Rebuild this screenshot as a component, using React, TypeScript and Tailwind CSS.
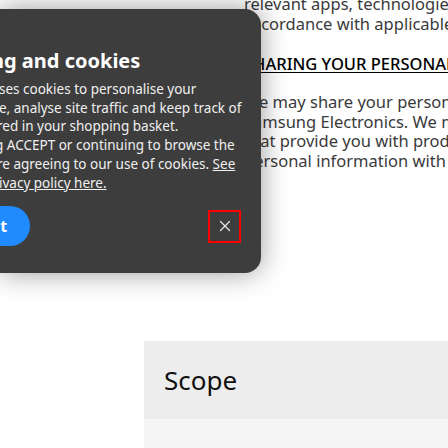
import { X } from 'lucide-react';

// 쿠키 배너가 개인정보 페이지 위에 떠 있는 화면
export default function App() {
  const pageLines = [
    'relevant apps, technologies and services in',
    'accordance with applicable law.',
  ];
  const bodyLines = [
    'We may share your personal information with',
    'Samsung Electronics. We may also share it with',
    'that provide you with products and services',
    'personal information with third parties',
  ];

  return (
    <div className="relative h-[448px] w-[448px] overflow-hidden bg-white font-['Noto_Sans',sans-serif]">
      {/* 본문 페이지 */}
      <div className="-mt-[6px] ml-[244px] whitespace-nowrap text-[16.5px] leading-[19.5px] text-[#3a3a3a]">
        {pageLines.map((line) => (
          <div key={line}>{line}</div>
        ))}
        <div className="mt-[21px] font-medium leading-[20px] text-black underline underline-offset-2">
          SHARING YOUR PERSONAL INFORMATION
        </div>
        <div className="mt-[18px]">
          {bodyLines.map((line) => (
            <div key={line}>{line}</div>
          ))}
        </div>
      </div>

      {/* Scope 섹션 */}
      <div className="ml-[144px] mt-[171px]">
        <div className="flex h-[78px] items-center bg-[#ededed] pl-5">
          <span className="text-[26px] leading-none text-[#111]">Scope</span>
        </div>
        <div className="h-[40px] bg-[#f5f5f5]" />
      </div>

      {/* 쿠키 배너 */}
      <div className="absolute left-0 top-[9px] flex h-[264px] w-[261px] flex-col rounded-r-[16px] bg-[#3d3d3d] pr-5 pt-[40px] whitespace-nowrap text-white shadow-[0_0_28px_rgba(0,0,0,0.4)]">
        <div className="-ml-[9px] text-[20px] font-bold leading-[24px]">ng and cookies</div>
        <div className="mt-[7px] text-[13.5px] leading-[18.7px] text-[#f0f0f0]">
          <div className="-ml-[1px]">ses cookies to personalise your</div>
          <div className="-ml-[1px]">e, analyse site traffic and keep track of</div>
          <div className="-ml-[3px]">red in your shopping basket.</div>
          <div className="-ml-[5px]">g ACCEPT or continuing to browse the</div>
          <div className="-ml-[3px]">
            re agreeing to our use of cookies. <span className="underline">See</span>
          </div>
          <div className="-ml-[1px] underline">ivacy policy here.</div>
        </div>
        <div className="mt-[14px] flex h-[40px] items-center justify-between">
          {/* Accept 버튼: 왼쪽 가장자리에서 잘림 */}
          <div className="flex h-[40px] w-[30px] shrink-0 justify-end overflow-hidden">
            <div className="flex h-[40px] w-[100px] shrink-0 items-center justify-center rounded-full bg-[#1f8bff] text-[16px] font-bold leading-none text-white">
              Accept
            </div>
          </div>
          <div className="flex h-[33px] w-[33px] shrink-0 items-center justify-center border-2 border-[#ff0000] text-[#e6e6e6]">
            <X className="h-[18px] w-[18px]" strokeWidth={1.6} />
          </div>
        </div>
      </div>
    </div>
  );
}
